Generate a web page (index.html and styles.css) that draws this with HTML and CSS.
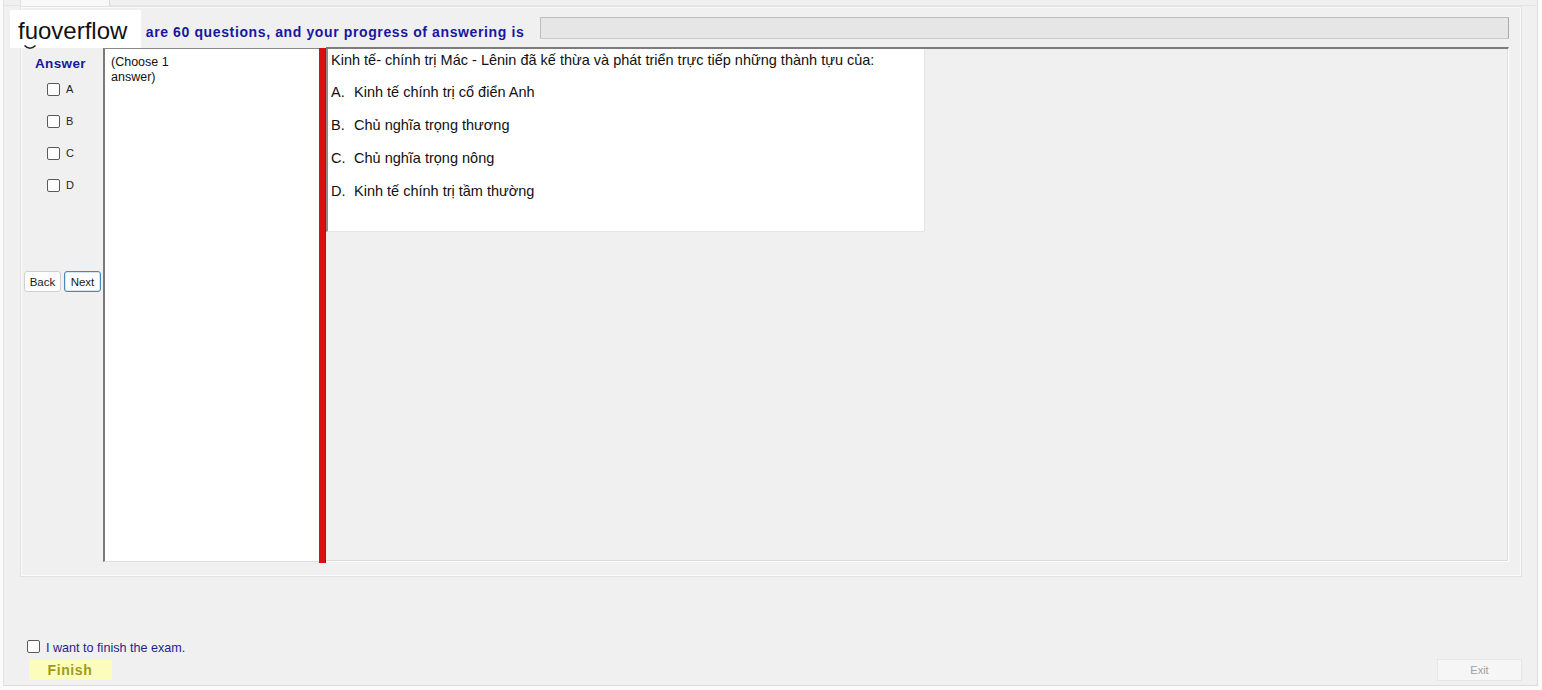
FILE: index.html
```html
<!DOCTYPE html>
<html lang="vi">
<head>
<meta charset="utf-8">
<title>Exam</title>
<link rel="stylesheet" href="styles.css">
</head>
<body>
<div class="window">
  <div class="tabstrip"><div class="tab"></div></div>
  <div class="groupbox">
    <div class="header">
      <span class="progress-label">There are 60 questions, and your progress of answering is</span>
      <div class="progress"></div>
    </div>
    <div class="main">
      <div class="answer-col">
        <div class="answer-title">Answer</div>
        <label class="opt"><input type="checkbox" class="cb"><span>A</span></label>
        <label class="opt"><input type="checkbox" class="cb"><span>B</span></label>
        <label class="opt"><input type="checkbox" class="cb"><span>C</span></label>
        <label class="opt"><input type="checkbox" class="cb"><span>D</span></label>
        <div class="nav">
          <button class="btn">Back</button>
          <button class="btn btn-focus">Next</button>
        </div>
      </div>
      <div class="hint-box">(Choose 1<br>answer)</div>
      <div class="splitter"></div>
      <div class="question-panel">
        <div class="question-box">
          <p class="q-text">Kinh tế- chính trị Mác - Lênin đã kế thừa và phát triển trực tiếp những thành tựu của:</p>
          <div class="q-options">
            <div class="q-opt"><span class="q-letter">A.</span>Kinh tế chính trị cổ điển Anh</div>
            <div class="q-opt"><span class="q-letter">B.</span>Chủ nghĩa trọng thương</div>
            <div class="q-opt"><span class="q-letter">C.</span>Chủ nghĩa trọng nông</div>
            <div class="q-opt"><span class="q-letter">D.</span>Kinh tế chính trị tầm thường</div>
          </div>
        </div>
      </div>
    </div>
  </div>
  <div class="footer">
    <div class="footer-left">
      <label class="finish-check"><input type="checkbox" class="cb"><span>I want to finish the exam.</span></label>
      <button class="finish">Finish</button>
    </div>
    <button class="exit">Exit</button>
  </div>
</div>
<div class="watermark">fuoverflow</div>
<svg class="arc" width="14" height="8" viewBox="0 0 14 8"><path d="M1.5 1.5 Q7 7 12.5 1.5" fill="none" stroke="#222" stroke-width="1.6"/></svg>
</body>
</html>
```
FILE: styles.css
```css
* { box-sizing: border-box; }
html, body { margin: 0; padding: 0; }
body {
  background: #fbfbfb;
  font-family: "Liberation Sans", Arial, sans-serif;
  width: 1542px;
  height: 690px;
  overflow: hidden;
  position: relative;
}
.window {
  margin-left: 3px;
  width: 1535px;
  height: 686px;
  background: #f0f0f0;
  border-left: 1px solid #e2e2e2;
  border-right: 1px solid #dcdcdc;
  border-bottom: 1px solid #dcdcdc;
  display: flex;
  flex-direction: column;
}
.tabstrip {
  height: 6px;
  border-bottom: 1px solid #e4e4e4;
  display: flex;
  padding-left: 16px;
}
.tab {
  width: 90px;
  height: 6px;
  background: #f8f8f8;
  border-left: 1px solid #e0e0e0;
  border-right: 1px solid #d8d8d8;
}
.groupbox {
  margin-left: 16px;
  width: 1502px;
  height: 571px;
  border: 1px solid #e2e2e2;
  box-shadow: inset 1px 1px 0 #fafafa, inset -1px -1px 0 #fafafa;
  display: flex;
  flex-direction: column;
  padding: 10px 12px 0 2px;
}
.header {
  height: 22px;
  display: flex;
  align-items: center;
  padding-left: 77px;
}
.progress-label {
  font-weight: bold;
  font-size: 14px;
  letter-spacing: 0.62px;
  color: #1717a0;
  padding-top: 8px;
  white-space: nowrap;
}
.progress {
  margin-left: 16px;
  flex: 1;
  height: 22px;
  background: #e6e6e6;
  border: 1px solid #bdbdbd;
  border-right-color: #a9a9a9;
  border-bottom-color: #c9c9c9;
}
.main {
  margin-top: 8px;
  height: 516px;
  display: flex;
}
.answer-col {
  width: 80px;
  display: flex;
  flex-direction: column;
  align-items: stretch;
}
.answer-title {
  margin-top: 9px;
  height: 16px;
  font-weight: bold;
  font-size: 13.5px;
  letter-spacing: 0.35px;
  color: #1717a0;
  padding-left: 12px;
}
.opt {
  display: flex;
  align-items: center;
  height: 13px;
  margin-top: 19px;
  padding-left: 24px;
  font-size: 11px;
  color: #222;
}
.answer-title + .opt { margin-top: 11px; }
.opt span { margin-left: 6px; margin-top: -1px; }
.cb {
  appearance: none;
  -webkit-appearance: none;
  margin: 0;
  width: 13px;
  height: 13px;
  border: 1px solid #5a5a5a;
  border-radius: 2px;
  background: #fff;
  flex: none;
}
.nav {
  margin-top: 79px;
  display: flex;
  gap: 3px;
  padding-left: 1px;
}
.btn {
  width: 37px;
  height: 21px;
  padding: 0;
  font-family: "Liberation Sans", Arial, sans-serif;
  font-size: 11.5px;
  color: #1a1a1a;
  background: #fdfdfd;
  border: 1px solid #d0d0d0;
  border-radius: 3px;
}
.btn-focus {
  border-color: #4a86b8;
  box-shadow: inset 0 0 0 1px #cfe6f6;
}
.hint-box {
  margin-top: 1px;
  width: 216px;
  height: 514px;
  background: #fff;
  border-left: 2px solid #7a7a7a;
  border-top: 1px solid #8a8a8a;
  border-bottom: 1px solid #e0e0e0;
  padding: 6px 0 0 6px;
  font-size: 12.5px;
  line-height: 15px;
  color: #111;
}
.splitter {
  margin-top: 1px;
  width: 7px;
  height: 515px;
  background: #db0f0f;
  border-right: 1px solid #8a2020;
}
.question-panel {
  flex: 1;
  height: 515px;
  border-top: 2px solid #7c7c7c;
  border-right: 1px solid #fff;
  border-bottom: 1px solid #fff;
  box-shadow: inset -1px -1px 0 #dcdcdc;
  background: #f0f0f0;
}
.question-box {
  width: 599px;
  height: 183px;
  background: #fff;
  border-left: 2px solid #8c8c8c;
  border-right: 1px solid #e4e4e4;
  border-bottom: 1px solid #e4e4e4;
  padding-left: 3px;
  font-size: 14.5px;
  color: #111;
}
.q-text {
  margin: 0;
  line-height: 22px;
  white-space: nowrap;
}
.q-options { padding-top: 5px; }
.q-opt {
  height: 33px;
  line-height: 33px;
  white-space: nowrap;
}
.q-letter {
  display: inline-block;
  width: 23px;
}
.footer {
  flex: 1;
  display: flex;
  justify-content: space-between;
  align-items: flex-end;
  padding: 0 15px 4px 23px;
}
.footer-left {
  display: flex;
  flex-direction: column;
  margin-bottom: 1px;
}
.finish-check {
  display: flex;
  align-items: center;
  height: 13px;
  font-size: 12.6px;
  color: #1f1f8c;
}
.finish-check span { margin-left: 6px; padding-top: 2px; }
.finish {
  margin-top: 7px;
  margin-left: 2px;
  width: 83px;
  height: 20px;
  padding: 0 1px 0 0;
  border: none;
  background: #fcfcbc;
  font-family: "Liberation Sans", Arial, sans-serif;
  font-weight: bold;
  font-size: 14px;
  letter-spacing: 0.6px;
  color: #9c9c1c;
}
.exit {
  width: 85px;
  height: 22px;
  padding: 0;
  background: #f6f6f6;
  border: 1px solid #e6e6e6;
  font-family: "Liberation Sans", Arial, sans-serif;
  font-size: 11px;
  color: #a0a0a0;
}
.watermark {
  position: absolute;
  left: 10px;
  top: 10px;
  width: 131px;
  height: 38px;
  background: #fff;
  font-size: 24px;
  line-height: 38px;
  padding: 2px 0 0 8px;
  color: #111;
}
.arc {
  position: absolute;
  left: 23px;
  top: 44px;
}
```
